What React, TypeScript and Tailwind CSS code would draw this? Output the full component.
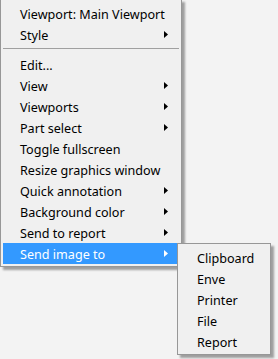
import React from "react";

type Item = { label: string; sub?: boolean; selected?: boolean };

const top: Item[] = [
  { label: "Viewport: Main Viewport" },
  { label: "Style", sub: true },
];

const rest: Item[] = [
  { label: "Edit..." },
  { label: "View", sub: true },
  { label: "Viewports", sub: true },
  { label: "Part select", sub: true },
  { label: "Toggle fullscreen" },
  { label: "Resize graphics window" },
  { label: "Quick annotation", sub: true },
  { label: "Background color", sub: true },
  { label: "Send to report", sub: true },
  { label: "Send image to", sub: true, selected: true },
];

const subItems = ["Clipboard", "Enve", "Printer", "File", "Report"];

function Arrow({ white }: { white?: boolean }) {
  return (
    <svg width="4" height="7" viewBox="0 0 4 7" className="ml-auto mr-[11px] shrink-0">
      <path d="M0 0 L4 3.5 L0 7 Z" fill={white ? "#ffffff" : "#000000"} />
    </svg>
  );
}

function Row({ item }: { item: Item }) {
  return (
    <div
      className={
        item.selected
          ? "flex h-[21px] items-center bg-[#3399ff] pl-[17px] text-white"
          : "flex h-[21px] items-center pl-[17px] text-black"
      }
    >
      <span className="whitespace-nowrap pt-[2px] leading-[19px]">{item.label}</span>
      {item.sub ? <Arrow white={item.selected} /> : null}
    </div>
  );
}

export default function App() {
  return (
    <div
      className="relative h-[359px] w-[278px] overflow-hidden bg-[#f3f3f3] text-[12.6px]"
      style={{ fontFamily: '"Noto Sans", "Open Sans", sans-serif' }}
    >
      <div className="mt-[-1px] w-[182px] border border-[#979797] bg-[#f0f0f0] px-[2px] pb-[2px] pt-[3px] shadow-[3px_3px_2px_rgba(0,0,0,0.35)]">
        {top.map((it) => (
          <Row key={it.label} item={it} />
        ))}
        <div className="flex h-[9px] flex-col pt-[3px]">
          <div className="h-px bg-[#a0a0a0]" />
        </div>
        {rest.map((it) => (
          <Row key={it.label} item={it} />
        ))}
      </div>
      <div className="absolute left-[177px] top-[243px] w-[94px] border border-[#979797] bg-[#f0f0f0] px-[2px] pb-[2px] pt-[3px] shadow-[3px_3px_2px_rgba(0,0,0,0.35)]">
        {subItems.map((s) => (
          <div key={s} className="flex h-[21px] items-center pl-[17px] text-black">
            <span className="whitespace-nowrap pt-[2px] leading-[19px]">{s}</span>
          </div>
        ))}
      </div>
    </div>
  );
}
